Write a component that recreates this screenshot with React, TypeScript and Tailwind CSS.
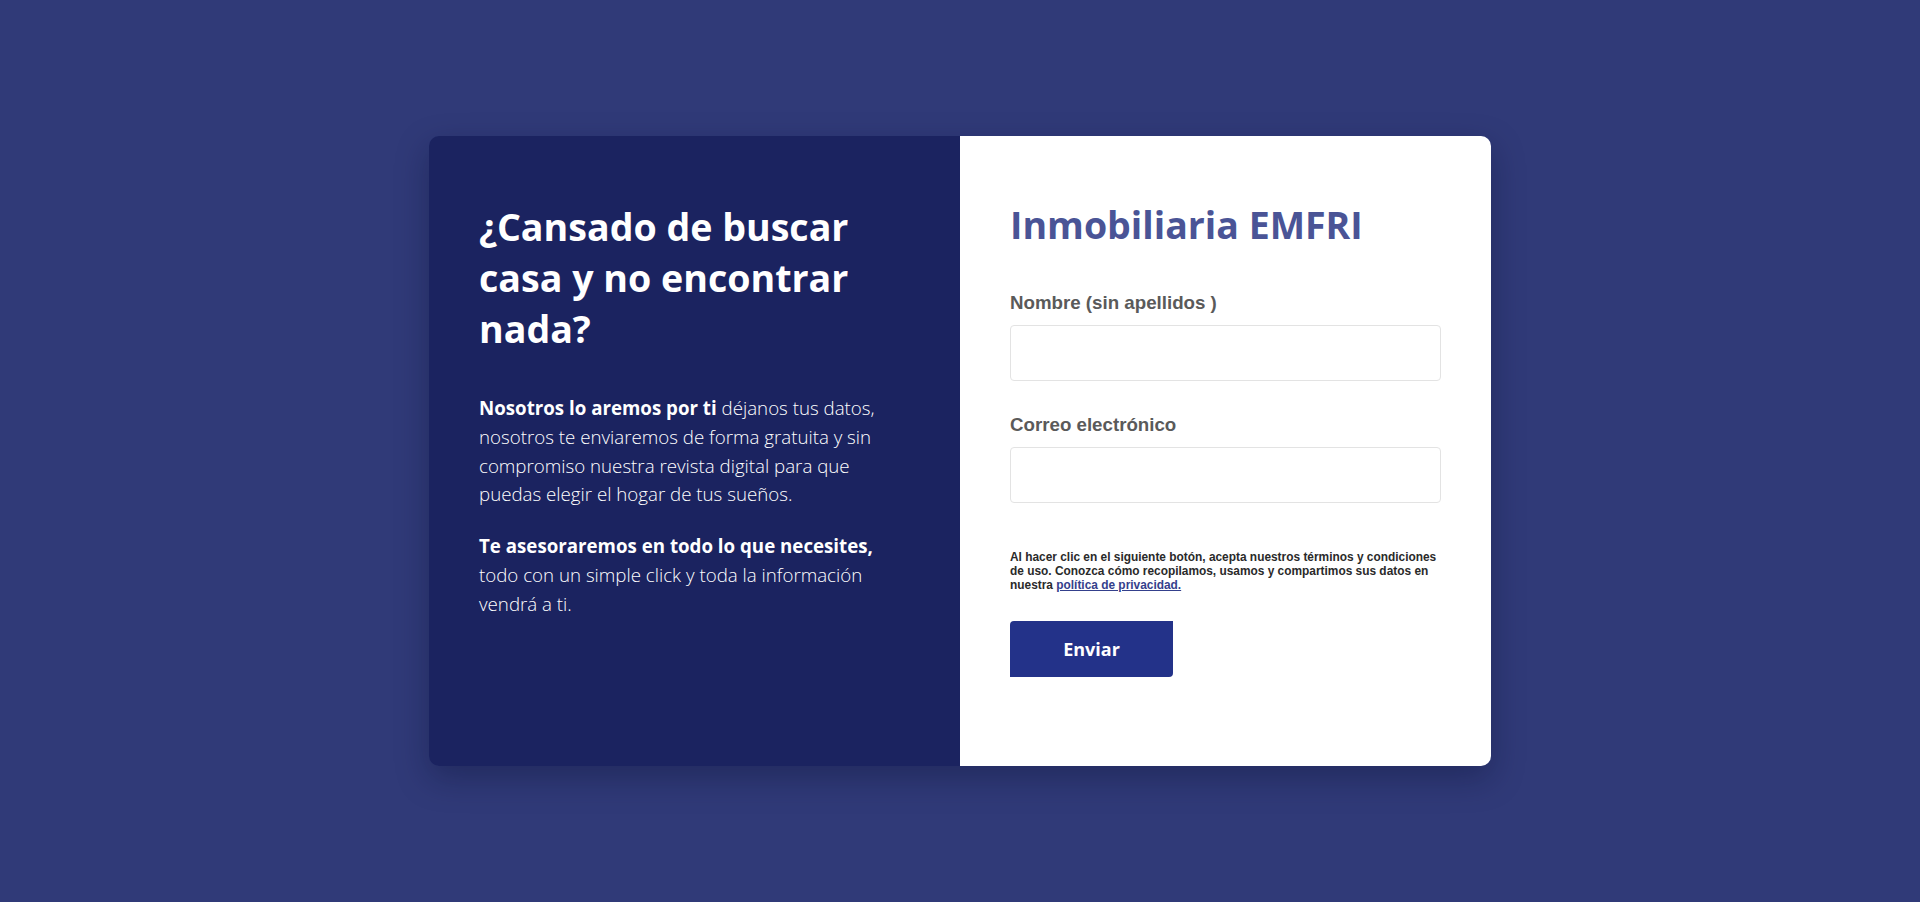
export default function App() {
  return (
    <div className="flex min-h-[902px] w-full items-center justify-center bg-[#303a78]">
      <div className="flex h-[630px] w-[1062px] overflow-hidden rounded-[10px] shadow-[0_12px_32px_rgba(10,15,50,0.35)]">
        <section className="w-[531px] bg-[#1b2360] px-[50px] pt-[64.5px] font-['Open_Sans',sans-serif] text-white">
          <h2 className="text-[37.6px] font-bold leading-[51px]">¿Cansado de buscar casa y no encontrar nada?</h2>
          <p className="mt-[40.5px] text-[18.72px] font-[350] leading-[28.8px]">
            <strong className="font-bold">Nosotros lo aremos por ti</strong> déjanos tus datos, nosotros te enviaremos de forma
            gratuita y sin compromiso nuestra revista digital para que puedas elegir el hogar de tus sueños.
          </p>
          <p className="mt-[23px] text-[18.72px] font-[350] leading-[28.8px]">
            <strong className="font-bold">Te asesoraremos en todo lo que necesites,</strong> todo con un simple click y toda la
            información vendrá a ti.
          </p>
        </section>

        <section className="flex-1 bg-white px-[50px] pt-[62.8px]">
          <h1 className="font-['Open_Sans',sans-serif] text-[37.5px] font-bold leading-[51px] text-[#4a5496]">Inmobiliaria EMFRI</h1>

          <form className="mt-[42.5px] font-['Liberation_Sans',Arial,sans-serif]" onSubmit={(e) => e.preventDefault()}>
            <label className="block">
              <span className="block text-[18.72px] font-bold leading-[21.5px] text-[#5a5a5a]">Nombre (sin apellidos )</span>
              <input type="text" className="mt-[11px] block h-[56px] w-full rounded-[4px] border border-[#e3e3e3] px-3 outline-none" />
            </label>

            <label className="mt-[33.5px] block">
              <span className="block text-[18.72px] font-bold leading-[21.5px] text-[#5a5a5a]">Correo electrónico</span>
              <input type="email" className="mt-[11px] block h-[56px] w-full rounded-[4px] border border-[#e3e3e3] px-3 outline-none" />
            </label>

            <p className="mt-[47px] text-[11.9px] font-bold leading-[14px] text-[#2a2a2a]">
              Al hacer clic en el siguiente botón, acepta nuestros términos y condiciones de uso. Conozca cómo recopilamos, usamos y
              compartimos sus datos en nuestra{' '}
              <a href="#" className="text-[#34408c] underline">
                política de privacidad.
              </a>
            </p>

            <button
              type="submit"
              className="mt-[29.5px] h-[56px] w-[163px] rounded-tl-[4px] rounded-br-[4px] bg-[#233289] font-['Open_Sans',sans-serif] text-[18px] font-bold text-white"
            >
              Enviar
            </button>
          </form>
        </section>
      </div>
    </div>
  );
}
